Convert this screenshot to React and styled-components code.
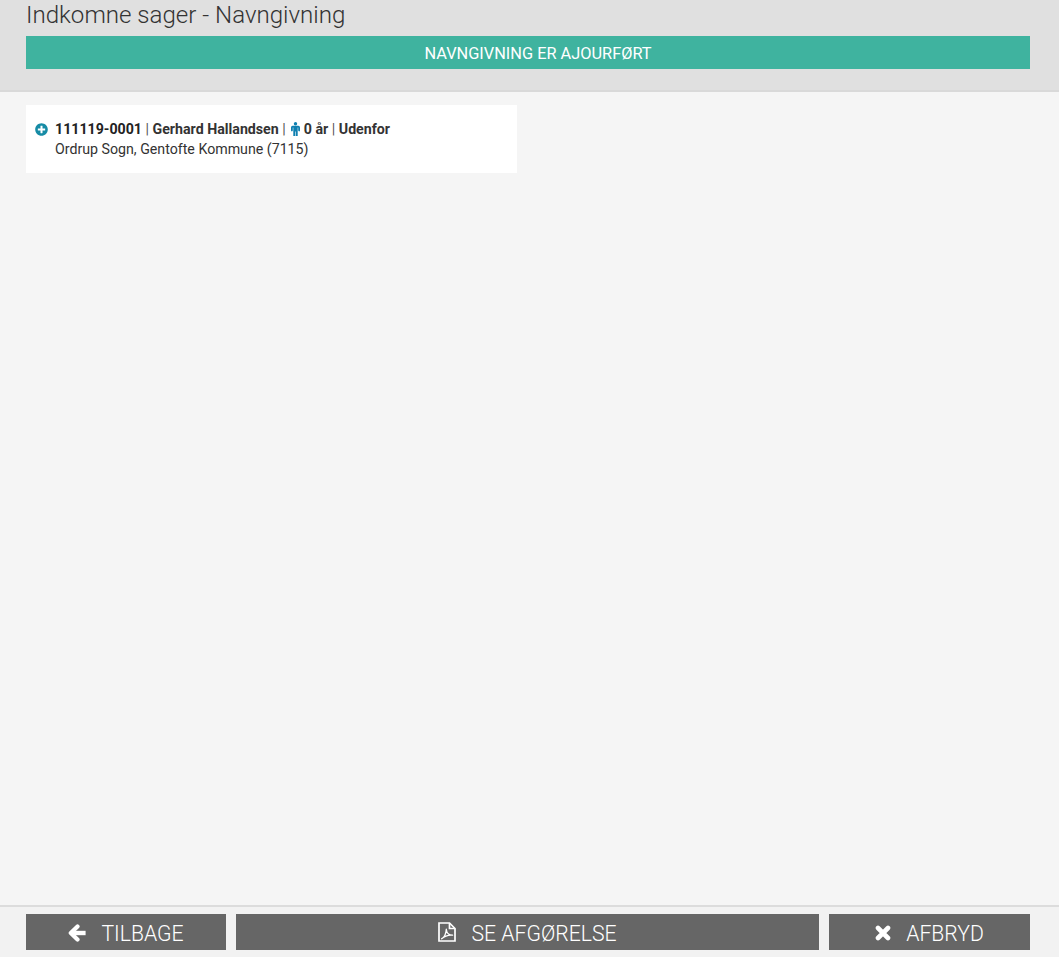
import React from "react";
import styled, { createGlobalStyle } from "styled-components";
import { FaPlusCircle } from "react-icons/fa";

const Global = createGlobalStyle`
  html, body { margin: 0; padding: 0; height: 100%; }
  body { font-family: Roboto, "Liberation Sans", sans-serif; background: #f5f5f5; color: #333; }
  * { box-sizing: border-box; }
`;

const Page = styled.div`
  display: flex;
  flex-direction: column;
  height: 957px;
  overflow: hidden;
`;

const Header = styled.header`
  height: 92px;
  flex: none;
  padding: 0 29px 0 26px;
  background: #e0e0e0;
  border-bottom: 2px solid #d9d9d9;
`;

const Title = styled.h1`
  margin: 0;
  height: 36px;
  font-size: 24.1px;
  line-height: 30px;
  font-weight: 300;
  color: #333;
`;

const Banner = styled.div`
  height: 33px;
  padding: 1px 0 0 20px;
  background: #3fb39f;
  color: #fff;
  font-size: 16.35px;
  line-height: 34px;
  text-align: center;
`;

const Main = styled.main`
  flex: 1;
  padding: 13px 26px;
`;

const Card = styled.section`
  display: flex;
  gap: 7px;
  width: 491px;
  height: 68px;
  padding: 14px 9px;
  background: #fff;
  font-size: 14.2px;
  line-height: 20px;
`;

const ToggleIcon = styled.span`
  display: flex;
  height: 20px;
  align-items: center;
  font-size: 13px;
  color: #168ba5;
`;

const CaseText = styled.div`
  display: flex;
  flex-direction: column;
`;

const CaseLine = styled.div`
  font-weight: 700;
  color: #333;
  white-space: nowrap;
`;

const CaseId = styled.span`
  color: #222;
`;

const Sep = styled.span`
  font-weight: 400;
  color: #555;
`;

const PersonSvg = styled.svg`
  width: 9px;
  height: 14px;
  margin-left: 2px;
  vertical-align: -2px;
  fill: #0f7fb0;
`;

const Location = styled.div`
  color: #333;
  white-space: nowrap;
`;

const Footer = styled.footer`
  height: 52px;
  flex: none;
  display: flex;
  gap: 10px;
  padding: 7px 29px 0 26px;
  background: #f2f2f2;
  border-top: 2px solid #dcdcdc;
`;

const ActionButton = styled.button`
  flex: ${(p) => p.$grow || "none"};
  width: ${(p) => p.$width || "auto"};
  height: 36px;
  display: flex;
  align-items: center;
  justify-content: center;
  gap: 15px;
  border: 0;
  padding: 2px 0 0;
  background: #666;
  color: #fff;
  font-family: inherit;
  font-size: 21.2px;
  font-weight: 300;
`;

const IconSvg = styled.svg`
  display: block;
  flex: none;
  width: ${(p) => p.$w}px;
  height: ${(p) => p.$h}px;
  margin-bottom: ${(p) => p.$lift || 0}px;
  fill: none;
  stroke: #fff;
`;

const PersonIcon = () => (
  <PersonSvg viewBox="0 0 9 14">
    <circle cx="4.5" cy="1.7" r="1.7" />
    <path d="M1.6 3.8H7.4Q9 3.8 9 5.4V8.6Q9 9.4 8.2 9.4T7.2 8.6V5.6H6.7V14H4.8V9.4H4.2V14H2.3V5.6H1.8V8.6Q1.8 9.4.9 9.4T0 8.6V5.4Q0 3.8 1.6 3.8Z" />
  </PersonSvg>
);

const ArrowIcon = () => (
  <IconSvg $w={18} $h={18} viewBox="0 0 18 18">
    <path d="M9.5 2.4 2.8 9l6.7 6.6" strokeWidth="4.2" strokeLinecap="round" strokeLinejoin="round" />
    <path d="M4 9H17.6" strokeWidth="4.4" />
  </IconSvg>
);

const PdfIcon = () => (
  <IconSvg $w={18} $h={20} $lift={3} viewBox="0 0 18 20">
    <path d="M1 1H11.5L17 6.5V19H1Z" strokeWidth="1.7" />
    <path d="M11.5 1V6.5H17" strokeWidth="1.7" />
    <path d="M3.6 16.8C6 15.4 8 12 8.3 7.2 8.6 11 10.5 13 14.6 13.2 11 12.8 6.8 14 3.6 16.8Z" strokeWidth="1.3" strokeLinejoin="round" />
  </IconSvg>
);

const CloseIcon = () => (
  <IconSvg $w={16} $h={16} viewBox="0 0 16 16">
    <path d="M3 3 13 13M13 3 3 13" strokeWidth="4.6" strokeLinecap="round" />
  </IconSvg>
);

export default function App() {
  return (
    <Page>
      <Global />
      <Header>
        <Title>Indkomne sager - Navngivning</Title>
        <Banner>NAVNGIVNING ER AJOURFØRT</Banner>
      </Header>
      <Main>
        <Card>
          <ToggleIcon><FaPlusCircle /></ToggleIcon>
          <CaseText>
            <CaseLine>
              <CaseId>111119-0001</CaseId> <Sep>|</Sep> Gerhard Hallandsen <Sep>|</Sep> <PersonIcon /> 0 år <Sep>|</Sep> Udenfor
            </CaseLine>
            <Location>Ordrup Sogn, Gentofte Kommune (7115)</Location>
          </CaseText>
        </Card>
      </Main>
      <Footer>
        <ActionButton $width="200px">
          <ArrowIcon />
          TILBAGE
        </ActionButton>
        <ActionButton $grow="1">
          <PdfIcon />
          SE AFGØRELSE
        </ActionButton>
        <ActionButton $width="201px">
          <CloseIcon />
          AFBRYD
        </ActionButton>
      </Footer>
    </Page>
  );
}
